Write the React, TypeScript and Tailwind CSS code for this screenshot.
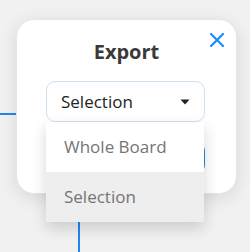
const font = { fontFamily: '"Open Sans", "Noto Sans", sans-serif' };

const CloseIcon = () => (
  <svg width="14" height="14" viewBox="0 0 14 14" fill="none">
    <path d="M1 1L13 13M13 1L1 13" stroke="#1a8cff" strokeWidth="2.2" strokeLinecap="square" />
  </svg>
);

const App = () => {
  const options = ["Whole Board", "Selection"];
  const selected = "Selection";

  return (
    <div
      className="relative w-[250px] h-[252px] overflow-hidden bg-[#f1f1f1] pt-[19px] pl-[16px]"
      style={font}
    >
      {/* board lines behind the modal */}
      <div className="absolute left-0 top-[113px] w-[20px] h-[2px] bg-[#2186f0]"></div>
      <div className="absolute left-[78px] top-[200px] w-[2px] h-[60px] bg-[#2186f0]"></div>

      <div className="relative w-[221px] h-[175px] bg-white border border-[#dfe8f2] rounded-[18px] shadow-[0_4px_18px_rgba(0,0,0,0.11)] pt-[19px] px-[29px]">
        <button className="absolute right-[12px] top-[13px] p-0">
          <CloseIcon />
        </button>
        <div className="text-center text-[20px] leading-[26px] font-bold text-[#3a3a3a]">
          Export
        </div>
        <div className="h-[16px]"></div>
        <div className="relative">
          <div className="w-[159px] h-[41px] flex items-center justify-between border border-[#cfe0f1] rounded-[9px] pl-[14px] pr-[14px]">
            <span className="text-[17px] leading-[24px] text-[#222]">{selected}</span>
            <svg width="10" height="6" viewBox="0 0 10 6">
              <path d="M0.5 0.5H9.5L5 5.5Z" fill="#222" />
            </svg>
          </div>
          <div className="h-[21px]"></div>
          <div className="w-[159px] h-[30px] rounded-[8px] bg-[#2186f0]"></div>

          <div className="absolute left-0 top-[41px] w-[158px] bg-white shadow-[0_6px_14px_rgba(0,0,0,0.16)]">
            {options.map((opt) => (
              <div
                key={opt}
                className={`h-[50px] flex items-center px-[18px] text-[17px] leading-[24px] text-[#757575] ${
                  opt === selected ? "bg-[#eeeeee]" : "bg-white"
                }`}
              >
                {opt}
              </div>
            ))}
          </div>
        </div>
      </div>
    </div>
  );
};

export default App;
